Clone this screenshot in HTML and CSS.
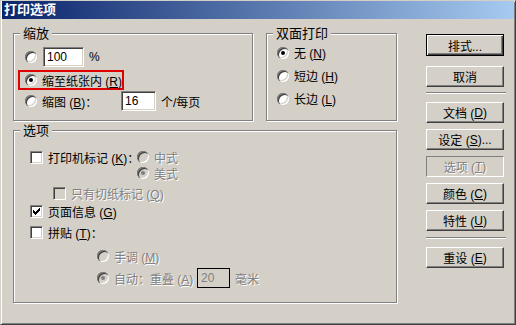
FILE: index.html
```html
<!DOCTYPE html>
<html lang="zh-CN">
<head>
    <meta charset="UTF-8">
    <title>打印选项</title>
    <link rel="stylesheet" href="styles.css">
</head>
<body>
    <div class="window">
        <div class="titlebar">打印选项</div>
        <div class="dialog">
            <div class="main">
                <div class="top-row">
                    <div class="group scale">
                        <div class="group-title">缩放</div>
                        <div class="opts">
                            <div class="opt row-percent">
                                <span class="radio"></span>
                                <input class="field field-percent" type="text" value="100">
                                <span class="after">%</span>
                            </div>
                            <div class="opt row-fit highlight">
                                <span class="radio checked"></span>
                                <span class="text">缩至纸张内 (<u>R</u>)</span>
                            </div>
                            <div class="opt row-thumb">
                                <span class="radio"></span>
                                <span class="text thumb-label">缩图 (<u>B</u>)：</span>
                                <input class="field field-thumb" type="text" value="16">
                                <span class="after">个/每页</span>
                            </div>
                        </div>
                    </div>
                    <div class="group duplex">
                        <div class="group-title">双面打印</div>
                        <div class="opts">
                            <div class="opt duplex-row first">
                                <span class="radio checked"></span>
                                <span class="text">无 (<u>N</u>)</span>
                            </div>
                            <div class="opt duplex-row">
                                <span class="radio"></span>
                                <span class="text">短边 (<u>H</u>)</span>
                            </div>
                            <div class="opt duplex-row">
                                <span class="radio"></span>
                                <span class="text">长边 (<u>L</u>)</span>
                            </div>
                        </div>
                    </div>
                </div>

                <div class="group options">
                    <div class="group-title">选项</div>
                    <div class="opts">
                        <div class="marks">
                            <div class="opt small marks-check">
                                <span class="check"></span>
                                <span class="text">打印机标记 (<u>K</u>)：</span>
                            </div>
                            <div class="marks-styles">
                                <div class="opt small">
                                    <span class="radio disabled"></span>
                                    <span class="text disabled-text">中式</span>
                                </div>
                                <div class="opt small">
                                    <span class="radio disabled checked"></span>
                                    <span class="text disabled-text">美式</span>
                                </div>
                            </div>
                        </div>
                        <div class="opt small crop-only">
                            <span class="check disabled"></span>
                            <span class="text disabled-text">只有切纸标记 (<u>Q</u>)</span>
                        </div>
                        <div class="opt small page-info">
                            <span class="check checked">
                                <svg width="7" height="7" viewBox="0 0 7 7" shape-rendering="crispEdges"><path d="M6 0h1v1h-1zM5 1h2v1h-2zM0 2h1v1h-1zM4 2h3v1h-3zM0 3h2v1h-2zM3 3h3v1h-3zM0 4h5v1h-5zM1 5h3v1h-3zM2 6h1v1h-1z" fill="#000"/></svg>
                            </span>
                            <span class="text">页面信息 (<u>G</u>)</span>
                        </div>
                        <div class="opt small tile">
                            <span class="check"></span>
                            <span class="text">拼贴 (<u>T</u>)：</span>
                        </div>
                        <div class="opt small tile-manual">
                            <span class="radio disabled"></span>
                            <span class="text disabled-text">手调 (<u>M</u>)</span>
                        </div>
                        <div class="opt tile-auto">
                            <span class="radio disabled checked"></span>
                            <span class="text disabled-text auto-label">自动：重叠 (<u>A</u>)</span>
                            <input class="field field-overlap" type="text" value="20" disabled>
                            <span class="after disabled-text">毫米</span>
                        </div>
                    </div>
                </div>
            </div>

            <div class="buttons">
                <button class="btn btn-default">排式...</button>
                <button class="btn btn-cancel">取消</button>
                <div class="sep"></div>
                <button class="btn btn-first">文档 (<u>D</u>)</button>
                <button class="btn">设定 (<u>S</u>)...</button>
                <button class="btn btn-off">选项 (<u>T</u>)</button>
                <button class="btn">颜色 (<u>C</u>)</button>
                <button class="btn">特性 (<u>U</u>)</button>
                <div class="sep sep-low"></div>
                <button class="btn btn-reset">重设 (<u>E</u>)</button>
            </div>
        </div>
    </div>
</body>
</html>
```

FILE: styles.css
```css
* {
    box-sizing: border-box;
}
body {
    margin: 0;
    font-family: "Liberation Sans", "Noto Sans CJK SC", sans-serif;
    font-size: 12px;
    color: #000;
    background: #d4d0c8;
}
.window {
    width: 516px;
    height: 325px;
    background: #d4d0c8;
    border: 1px solid;
    border-color: #d4d0c8 #404040 #404040 #d4d0c8;
    box-shadow: inset 1px 1px #fff, inset -1px -1px #808080;
    padding: 0 1px;
}
.titlebar {
    height: 18px;
    padding-left: 2px;
    background: linear-gradient(to right, #0a246a, #a6caf0);
    color: #fff;
    font-weight: bold;
    font-size: 13px;
    line-height: 18px;
}
.dialog {
    display: flex;
    padding: 14px 0 0 11px;
}
.main {
    width: 384px;
}
.top-row {
    display: flex;
}

/* group boxes */
.group {
    border: 1px solid #808080;
    box-shadow: inset 1px 1px #fff, 1px 1px #fff;
}
.group-title {
    display: table;
    margin: -7px 0 0 6px;
    padding: 0 3px;
    background: #d4d0c8;
    font-size: 13px;
    line-height: 13px;
}
.scale {
    width: 240px;
    height: 88px;
}
.scale .opts {
    padding-left: 11px;
}
.duplex {
    width: 131px;
    height: 88px;
    margin-left: 13px;
}
.duplex .opts {
    padding-left: 10px;
}
.options {
    height: 173px;
    margin-top: 9px;
}
.options .opts {
    padding-left: 16px;
}

/* option rows */
.opt {
    display: flex;
    align-items: center;
    height: 20px;
    white-space: nowrap;
}
.opt.small {
    height: 16px;
}
.text {
    margin-left: 5px;
}
.after {
    margin-left: 5px;
}
.row-percent {
    margin-top: 7px;
}
.row-fit {
    margin-top: 3px;
}
.row-thumb {
    margin-top: 1px;
}
.highlight {
    width: 106px;
    margin-left: -7px;
    padding-left: 5px;
    border: 2px solid #e00000;
}
.thumb-label {
    width: 79px;
}
.duplex-row {
    height: 23px;
}
.duplex-row.first {
    margin-top: 1px;
}
.marks {
    display: flex;
    margin-top: 12px;
}
.marks-check {
    width: 107px;
}
.crop-only {
    margin: 4px 0 0 23px;
}
.page-info {
    margin-top: 2px;
}
.tile {
    margin-top: 5px;
}
.tile-manual {
    margin: 8px 0 0 67px;
}
.tile-auto {
    margin: 4px 0 0 67px;
}
.auto-label {
    width: 78px;
}
.disabled-text {
    color: #808080;
    text-shadow: 1px 1px 0 #fff;
}

/* controls */
.radio {
    display: flex;
    align-items: center;
    justify-content: center;
    flex-shrink: 0;
    width: 12px;
    height: 12px;
    border-radius: 50%;
    background: #fff;
    box-shadow: inset 1px 1px 0 #808080, inset 2px 2px 0 #404040,
                inset -1px -1px 0 #fff, inset -2px -2px 0 #d4d0c8;
}
.radio.disabled {
    background: #d4d0c8;
}
.radio.checked::after {
    content: "";
    width: 4px;
    height: 4px;
    border-radius: 50%;
    background: #000;
}
.radio.disabled.checked::after {
    background: #808080;
}
.check {
    display: flex;
    align-items: center;
    justify-content: center;
    flex-shrink: 0;
    width: 13px;
    height: 13px;
    background: #fff;
    border: 1px solid;
    border-color: #808080 #fff #fff #808080;
    box-shadow: inset 1px 1px #404040, inset -1px -1px #d4d0c8;
}
.check.disabled {
    background: #d4d0c8;
}
.check svg {
    display: block;
}
.field {
    height: 20px;
    padding: 0 0 0 3px;
    background: #fff;
    border: 1px solid;
    border-color: #808080 #fff #fff #808080;
    box-shadow: inset 1px 1px #404040, inset -1px -1px #d4d0c8;
    font-family: "Liberation Sans", sans-serif;
    font-size: 12px;
    color: #000;
    outline: none;
}
.field-percent {
    width: 41px;
    margin-left: 6px;
}
.field-thumb {
    width: 35px;
}
.field-overlap {
    width: 33px;
    margin-left: 5px;
    background: #d4d0c8;
    border: 1px solid #000;
    box-shadow: none;
    color: #808080;
}

/* command buttons */
.buttons {
    width: 80px;
    margin-left: 29px;
}
.btn {
    display: flex;
    align-items: center;
    justify-content: center;
    width: 78px;
    height: 21px;
    margin-top: 6px;
    padding: 0;
    background: #d4d0c8;
    border: 1px solid;
    border-color: #fff #404040 #404040 #fff;
    box-shadow: inset -1px -1px #808080;
    font-family: "Liberation Sans", "Noto Sans CJK SC", sans-serif;
    font-size: 12px;
    color: #000;
}
.btn-default {
    height: 22px;
    margin-top: 1px;
    border-color: #000;
    box-shadow: inset 1px 1px #fff, inset -1px -1px #404040, inset -2px -2px #808080;
}
.btn-cancel {
    margin-top: 10px;
}
.btn-first {
    margin-top: 8px;
}
.btn-off {
    border-color: #808080 #fff #fff #808080;
    box-shadow: none;
    color: #808080;
    text-shadow: 1px 1px 0 #fff;
}
.btn-reset {
    margin-top: 8px;
}
.sep {
    width: 80px;
    height: 2px;
    margin-top: 5px;
    border-top: 1px solid #808080;
    border-bottom: 1px solid #fff;
}
.sep-low {
    margin-top: 6px;
}
```
